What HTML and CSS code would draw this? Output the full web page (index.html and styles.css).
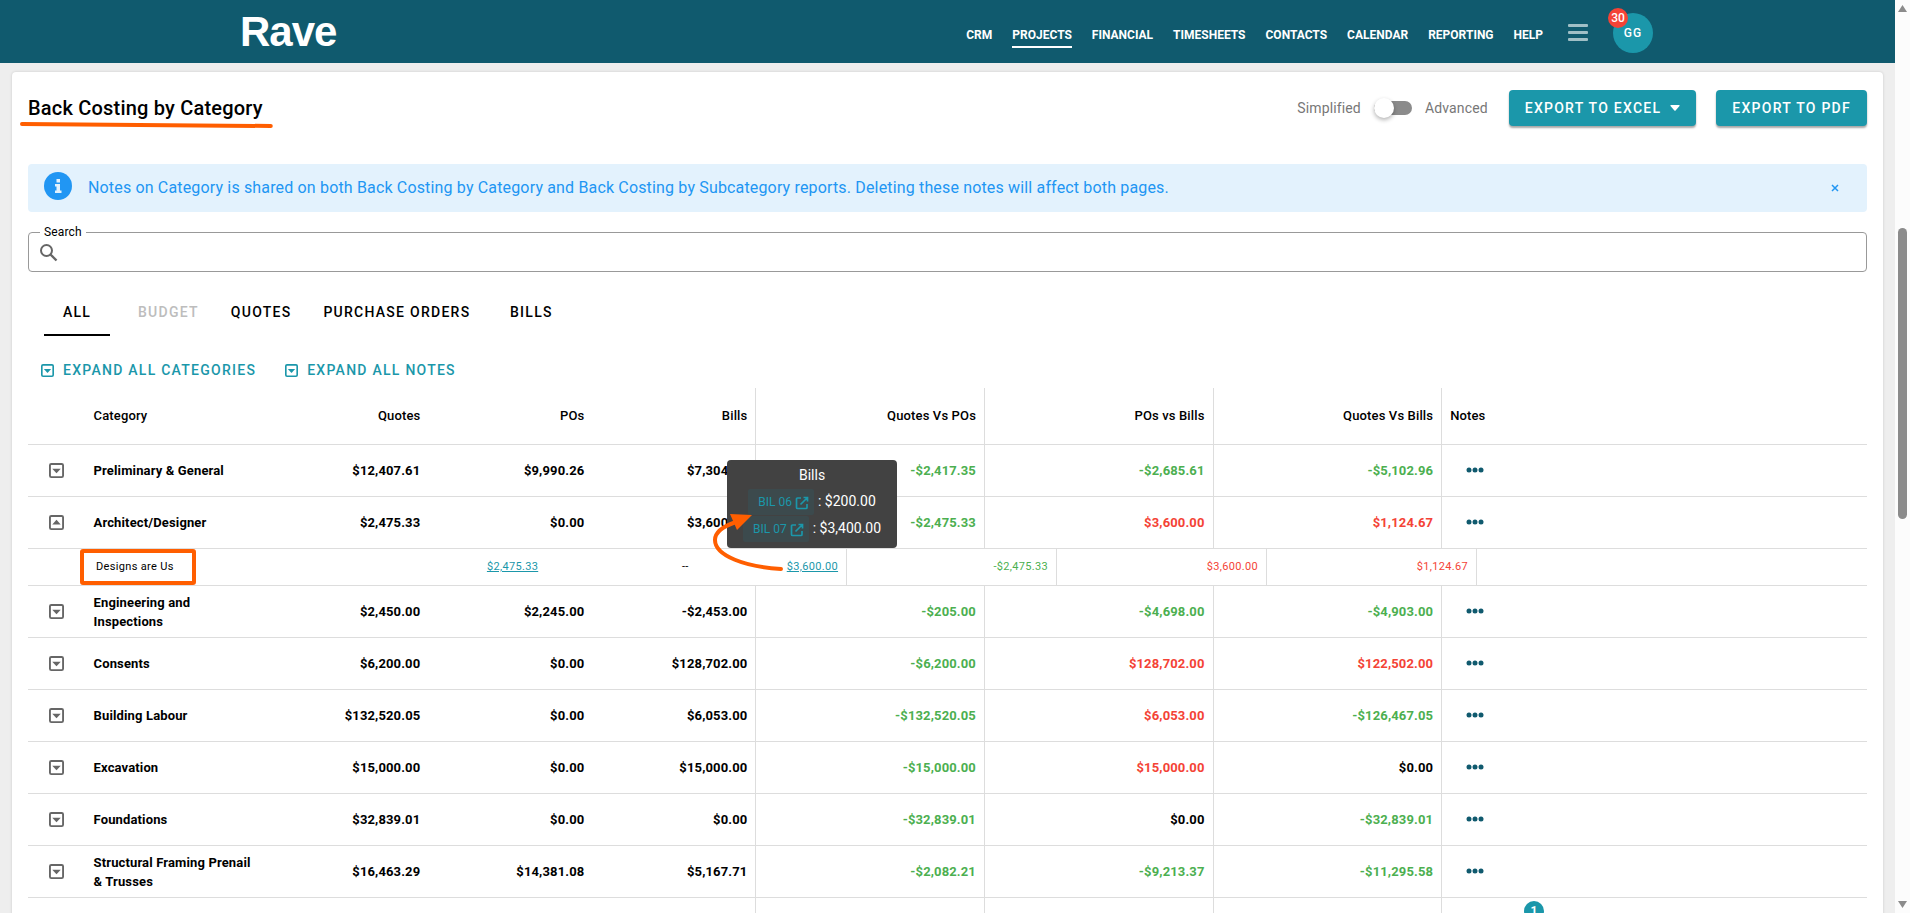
FILE: index.html
```html
<!DOCTYPE html>
<html lang="en">
<head>
    <meta charset="UTF-8">
    <meta name="viewport" content="width=device-width, initial-scale=1.0">
    <title>Back Costing by Category</title>
    <link rel="stylesheet" href="styles.css">
</head>
<body>
    <!-- shared icons -->
    <svg class="sprite" aria-hidden="true">
        <symbol id="caret-down" viewBox="0 0 16 16">
            <rect x="1" y="1" width="14" height="14" rx="1.5" fill="none" stroke="currentColor" stroke-width="2"/>
            <path d="M3.500 6h9l-4.500 5z" fill="currentColor"/>
        </symbol>
        <symbol id="caret-up" viewBox="0 0 16 16">
            <rect x="1" y="1" width="14" height="14" rx="1.5" fill="none" stroke="currentColor" stroke-width="2"/>
            <path d="M3.500 10h9l-4.500-5z" fill="currentColor"/>
        </symbol>
        <symbol id="dots" viewBox="0 0 18 6">
            <circle cx="3" cy="3" r="2.5" fill="currentColor"/>
            <circle cx="9" cy="3" r="2.5" fill="currentColor"/>
            <circle cx="15" cy="3" r="2.5" fill="currentColor"/>
        </symbol>
        <symbol id="open" viewBox="0 0 14 14">
            <path d="M6 2H2.500Q1.500 2 1.500 3v8.500q0 1 1 1H11q1 0 1-1V8M8.500 1.500h4v4M12.500 1.500L5.500 8.500" fill="none" stroke="currentColor" stroke-width="1.7"/>
        </symbol>
    </svg>

    <div class="window">
        <div class="page">
            <header class="topbar">
                <a class="logo" href="#">Rave</a>
                <nav class="nav">
                    <a href="#">CRM</a>
                    <a href="#" class="current">PROJECTS</a>
                    <a href="#">FINANCIAL</a>
                    <a href="#">TIMESHEETS</a>
                    <a href="#">CONTACTS</a>
                    <a href="#">CALENDAR</a>
                    <a href="#">REPORTING</a>
                    <a href="#">HELP</a>
                </nav>
                <button type="button" class="menu" aria-label="Menu"><span></span><span></span><span></span></button>
                <button type="button" class="avatar">GG<span class="count">30</span></button>
            </header>

            <main class="card">
                <div class="heading">
                    <h1>Back Costing by Category
                        <svg class="underline" viewBox="0 0 254 6" preserveAspectRatio="none"><path d="M2 2L252 4" stroke="#ff5e00" stroke-width="4" stroke-linecap="round"/></svg>
                    </h1>
                    <div class="mode">
                        <span>Simplified</span>
                        <input type="checkbox" class="switch" id="mode">
                        <label for="mode">Advanced</label>
                    </div>
                    <button type="button" class="btn">EXPORT TO EXCEL
                        <svg width="10" height="6" viewBox="0 0 10 6"><path d="M1 0h8q1 0 .5 1L5.600 5.500q-.6.500-1.200 0L.5 1Q0 0 1 0z" fill="#fff"/></svg>
                    </button>
                    <button type="button" class="btn">EXPORT TO PDF</button>
                </div>

                <div class="alert">
                    <svg width="28" height="28" viewBox="0 0 28 28">
                        <circle cx="14" cy="14" r="14" fill="#2196f3"/>
                        <path d="M12.500 7h3.500v3.500h-3.500zM11 12h5v6.500h1.500V21H11v-2.500h1.500v-4H11z" fill="#e3f2fd"/>
                    </svg>
                    <p>Notes on Category is shared on both Back Costing by Category and Back Costing by Subcategory reports. Deleting these notes will affect both pages.</p>
                    <button type="button" class="close" aria-label="Close"><svg width="8" height="8" viewBox="0 0 8 8"><path d="M1 1l6 6M7 1L1 7" stroke="currentColor" stroke-width="1.5"/></svg></button>
                </div>

                <fieldset class="search">
                    <legend><label for="search">Search</label></legend>
                    <svg width="18" height="18" viewBox="0 0 18 18"><circle cx="6.500" cy="6.500" r="5.500" fill="none" stroke="#666" stroke-width="2"/><path d="M10.500 10.500L16.500 16.500" stroke="#666" stroke-width="2.400"/></svg>
                    <input type="text" id="search">
                </fieldset>

                <div class="tabs" role="tablist">
                    <button type="button" role="tab" class="active">ALL</button>
                    <button type="button" role="tab" disabled>BUDGET</button>
                    <button type="button" role="tab">QUOTES</button>
                    <button type="button" role="tab">PURCHASE ORDERS</button>
                    <button type="button" role="tab">BILLS</button>
                </div>

                <div class="expand">
                    <button type="button"><svg width="13" height="13"><use href="#caret-down"/></svg>EXPAND ALL CATEGORIES</button>
                    <button type="button"><svg width="13" height="13"><use href="#caret-down"/></svg>EXPAND ALL NOTES</button>
                </div>

                <table class="costs">
                    <colgroup>
                        <col class="c-toggle"><col class="c-name">
                        <col class="c-sum"><col class="c-sum"><col class="c-sum">
                        <col class="c-diff"><col class="c-diff"><col class="c-diff">
                        <col>
                    </colgroup>
                    <thead>
                        <tr>
                            <th></th><th class="name">Category</th><th>Quotes</th><th>POs</th><th class="line">Bills</th>
                            <th class="line">Quotes Vs POs</th><th class="line">POs vs Bills</th><th class="line">Quotes Vs Bills</th><th class="notes">Notes</th>
                        </tr>
                    </thead>
                    <tbody>
                        <tr>
                            <td class="toggle"><button type="button" aria-label="Expand"><svg width="15" height="15"><use href="#caret-down"/></svg></button></td>
                            <td class="name">Preliminary &amp; General</td><td>$12,407.61</td><td>$9,990.26</td><td class="line">$7,304.91</td>
                            <td class="line good">-$2,417.35</td><td class="line good">-$2,685.61</td><td class="line good">-$5,102.96</td>
                            <td class="more"><button type="button" aria-label="Notes"><svg width="18" height="6"><use href="#dots"/></svg></button></td>
                        </tr>
                        <tr>
                            <td class="toggle"><button type="button" aria-label="Collapse"><svg width="15" height="15"><use href="#caret-up"/></svg></button></td>
                            <td class="name">Architect/Designer</td><td>$2,475.33</td><td>$0.00</td><td class="line">$3,600.00</td>
                            <td class="line good">-$2,475.33</td><td class="line bad">$3,600.00</td><td class="line bad">$1,124.67</td>
                            <td class="more"><button type="button" aria-label="Notes"><svg width="18" height="6"><use href="#dots"/></svg></button></td>
                        </tr>
                        <tr class="detail">
                            <td colspan="9">
                                <table class="suppliers">
                                    <colgroup>
                                        <col class="s-name">
                                        <col class="s-sum"><col class="s-sum"><col class="s-sum">
                                        <col class="s-diff"><col class="s-diff"><col class="s-diff">
                                        <col>
                                    </colgroup>
                                    <tr>
                                        <td class="name"><span class="marked">Designs are Us</span></td>
                                        <td><a href="#">$2,475.33</a></td>
                                        <td>--</td>
                                        <td class="line">
                                            <span class="anchor"><a href="#">$3,600.00</a>
                                                <span class="tooltip" role="tooltip">
                                                    <span>Bills</span>
                                                    <span class="bill"><a href="#">BIL 06 <svg width="14" height="14"><use href="#open"/></svg></a>: $200.00</span>
                                                    <span class="bill"><a href="#">BIL 07 <svg width="14" height="14"><use href="#open"/></svg></a>: $3,400.00</span>
                                                </span>
                                                <svg class="arrow" width="76" height="60" viewBox="0 0 76 60">
                                                    <path d="M69 55C34 53 3 42 3 26C3 18 12 12 24 8" fill="none" stroke="#ff5e00" stroke-width="4" stroke-linecap="round"/>
                                                    <path d="M18 0L40 1L25 16z" fill="#ff5e00"/>
                                                </svg>
                                            </span>
                                        </td>
                                        <td class="line good">-$2,475.33</td><td class="line bad">$3,600.00</td><td class="line bad">$1,124.67</td><td></td>
                                    </tr>
                                </table>
                            </td>
                        </tr>
                        <tr>
                            <td class="toggle"><button type="button" aria-label="Expand"><svg width="15" height="15"><use href="#caret-down"/></svg></button></td>
                            <td class="name">Engineering and Inspections</td><td>$2,450.00</td><td>$2,245.00</td><td class="line">-$2,453.00</td>
                            <td class="line good">-$205.00</td><td class="line good">-$4,698.00</td><td class="line good">-$4,903.00</td>
                            <td class="more"><button type="button" aria-label="Notes"><svg width="18" height="6"><use href="#dots"/></svg></button></td>
                        </tr>
                        <tr>
                            <td class="toggle"><button type="button" aria-label="Expand"><svg width="15" height="15"><use href="#caret-down"/></svg></button></td>
                            <td class="name">Consents</td><td>$6,200.00</td><td>$0.00</td><td class="line">$128,702.00</td>
                            <td class="line good">-$6,200.00</td><td class="line bad">$128,702.00</td><td class="line bad">$122,502.00</td>
                            <td class="more"><button type="button" aria-label="Notes"><svg width="18" height="6"><use href="#dots"/></svg></button></td>
                        </tr>
                        <tr>
                            <td class="toggle"><button type="button" aria-label="Expand"><svg width="15" height="15"><use href="#caret-down"/></svg></button></td>
                            <td class="name">Building Labour</td><td>$132,520.05</td><td>$0.00</td><td class="line">$6,053.00</td>
                            <td class="line good">-$132,520.05</td><td class="line bad">$6,053.00</td><td class="line good">-$126,467.05</td>
                            <td class="more"><button type="button" aria-label="Notes"><svg width="18" height="6"><use href="#dots"/></svg></button></td>
                        </tr>
                        <tr>
                            <td class="toggle"><button type="button" aria-label="Expand"><svg width="15" height="15"><use href="#caret-down"/></svg></button></td>
                            <td class="name">Excavation</td><td>$15,000.00</td><td>$0.00</td><td class="line">$15,000.00</td>
                            <td class="line good">-$15,000.00</td><td class="line bad">$15,000.00</td><td class="line">$0.00</td>
                            <td class="more"><button type="button" aria-label="Notes"><svg width="18" height="6"><use href="#dots"/></svg></button></td>
                        </tr>
                        <tr>
                            <td class="toggle"><button type="button" aria-label="Expand"><svg width="15" height="15"><use href="#caret-down"/></svg></button></td>
                            <td class="name">Foundations</td><td>$32,839.01</td><td>$0.00</td><td class="line">$0.00</td>
                            <td class="line good">-$32,839.01</td><td class="line">$0.00</td><td class="line good">-$32,839.01</td>
                            <td class="more"><button type="button" aria-label="Notes"><svg width="18" height="6"><use href="#dots"/></svg></button></td>
                        </tr>
                        <tr>
                            <td class="toggle"><button type="button" aria-label="Expand"><svg width="15" height="15"><use href="#caret-down"/></svg></button></td>
                            <td class="name">Structural Framing Prenail &amp; Trusses</td><td>$16,463.29</td><td>$14,381.08</td><td class="line">$5,167.71</td>
                            <td class="line good">-$2,082.21</td><td class="line good">-$9,213.37</td><td class="line good">-$11,295.58</td>
                            <td class="more"><button type="button" aria-label="Notes"><svg width="18" height="6"><use href="#dots"/></svg></button></td>
                        </tr>
                        <tr>
                            <td></td><td></td><td></td><td></td><td class="line"></td><td class="line"></td><td class="line"></td><td class="line"></td>
                            <td class="noted"><span class="badge">1</span></td>
                        </tr>
                    </tbody>
                </table>
            </main>
        </div>

        <div class="scrollbar" aria-hidden="true">
            <svg width="9" height="7" viewBox="0 0 9 7"><path d="M4.500 0L9 7H0z" fill="#8b8b8b"/></svg>
            <span class="track"><span class="thumb"></span></span>
            <svg width="9" height="7" viewBox="0 0 9 7"><path d="M4.500 7L9 0H0z" fill="#8b8b8b"/></svg>
        </div>
    </div>
</body>
</html>
```
FILE: styles.css
```css
* {
    box-sizing: border-box;
}
body {
    margin: 0;
    font-family: Roboto, "Liberation Sans", sans-serif;
    font-size: 14px;
    color: #000;
    background: #eee;
}
button {
    font: inherit;
    color: inherit;
    padding: 0;
    border: none;
    background: none;
    cursor: pointer;
}
.sprite {
    display: none;
}
.window {
    display: flex;
    height: 100vh;
    overflow: hidden;
}
.page {
    flex: 1;
    min-width: 0;
    overflow: hidden;
}

/* top bar */
.topbar {
    display: flex;
    align-items: center;
    height: 63px;
    padding: 0 242px 0 240px;
    background: #105a6e;
    color: #fff;
}
.logo {
    margin-right: auto;
    font-family: "Liberation Sans", Arial, sans-serif;
    font-size: 42px;
    font-weight: bold;
    line-height: 48px;
    letter-spacing: -1px;
    color: #fff;
    text-decoration: none;
}
.nav {
    display: flex;
    gap: 20px;
    padding-top: 8px;
    font-size: 12px;
    font-weight: bold;
}
.nav a {
    height: 24px;
    line-height: 16px;
    padding-top: 3px;
    color: #fff;
    text-decoration: none;
    border-bottom: 2px solid transparent;
}
.nav .current {
    border-color: #fff;
}
.menu {
    display: flex;
    flex-direction: column;
    gap: 4px;
    margin: 1px 25px 0;
}
.menu span {
    width: 20px;
    height: 3px;
    border-radius: 1px;
    background: #a0bfc6;
}
.avatar {
    position: relative;
    width: 40px;
    height: 40px;
    margin-top: 3px;
    border-radius: 50%;
    background: #1b97aa;
    font-size: 12px;
    font-weight: 500;
    letter-spacing: 1px;
}
.count {
    position: absolute;
    top: -5px;
    left: -5px;
    width: 20px;
    height: 20px;
    border-radius: 50%;
    background: #f44336;
    line-height: 20px;
    letter-spacing: 0;
}

/* card */
.card {
    margin: 9px 12px 0;
    padding: 0 16px;
    border-radius: 4px;
    background: #fff;
    box-shadow: 0 0 3px rgba(0,0,0,0.15);
    letter-spacing: 0.01em;
}
.heading {
    display: flex;
    align-items: center;
    height: 72px;
}
h1 {
    position: relative;
    margin: 0 auto 0 0;
    font-size: 20px;
    font-weight: 500;
    line-height: 32px;
    letter-spacing: 0.01em;
}
.underline {
    position: absolute;
    left: -8px;
    bottom: -4px;
    width: calc(100% + 18px);
    height: 6px;
}
.mode {
    display: flex;
    align-items: center;
    gap: 13px;
    margin-right: 21px;
    color: #777;
}
.switch {
    appearance: none;
    position: relative;
    width: 38px;
    height: 14px;
    margin: 0;
    border-radius: 7px;
    background: #8b8b8b;
}
.switch::before {
    content: "";
    position: absolute;
    top: -3px;
    left: 0;
    width: 20px;
    height: 20px;
    border-radius: 50%;
    background: #fff;
    box-shadow: 0 2px 4px rgba(0,0,0,0.3);
}
.btn {
    display: flex;
    align-items: center;
    gap: 9px;
    height: 36px;
    padding: 0 16px;
    border-radius: 4px;
    background: #1b97aa;
    color: #fff;
    font-weight: 500;
    letter-spacing: 0.09em;
    box-shadow: 0 2px 2px rgba(0,0,0,0.35);
}
.btn + .btn {
    margin-left: 20px;
}
.alert {
    display: flex;
    align-items: center;
    height: 48px;
    margin-top: 20px;
    padding: 0 28px 0 16px;
    border-radius: 4px;
    background: #e3f2fd;
    color: #2196f3;
    font-size: 16px;
    letter-spacing: 0.01em;
}
.alert > svg {
    margin-bottom: 4px;
}
.alert p {
    flex: 1;
    margin: 0 16px;
    padding-bottom: 2px;
}
.close svg {
    display: block;
}
.search {
    display: flex;
    align-items: center;
    height: 47px;
    margin: 13px 0 0;
    padding: 0 11px 4px;
    border: 1px solid #999;
    border-radius: 4px;
}
.search legend {
    padding: 0 4px;
    font-size: 12px;
    line-height: 14px;
}
.search input {
    flex: 1;
    height: 28px;
    border: none;
    outline: none;
    background: none;
    font: inherit;
}

/* tabs */
.tabs {
    display: flex;
    margin: 16px 4px 0;
}
.tabs button {
    position: relative;
    min-width: 90px;
    height: 48px;
    padding: 0 16px;
    font-weight: 500;
    letter-spacing: 0.09em;
}
.tabs button:disabled {
    color: #bdbdbd;
}
.tabs .active::after {
    content: "";
    position: absolute;
    left: 12px;
    right: 12px;
    bottom: 0;
    height: 2px;
    background: #000;
}
.expand {
    display: flex;
    gap: 29px;
    height: 36px;
    margin: 16px 0 0 13px;
}
.expand button {
    display: flex;
    align-items: center;
    gap: 9px;
    color: #1b97aa;
    font-weight: 500;
    letter-spacing: 0.09em;
}

/* table */
table {
    width: 100%;
    table-layout: fixed;
    border-collapse: separate;
    border-spacing: 0;
}
.c-toggle { width: 3.13%; }
.c-name { width: 9.72%; }
.c-sum { width: 8.92%; }
.c-diff { width: 12.43%; }
.s-name { width: 20%; }
.s-sum { width: 8.18%; }
.s-diff { width: 11.42%; }
th, td {
    height: 52px;
    padding: 0 8px;
    border-bottom: 1px solid #ddd;
    font-size: 13px;
    font-weight: bold;
    line-height: 19px;
    text-align: right;
}
th {
    height: 57px;
    padding-bottom: 2px;
    font-weight: 500;
}
.line {
    border-right: 1px solid #ddd;
}
.name, .notes, .more {
    text-align: left;
}
.good {
    color: #4caf50;
}
.bad {
    color: #f44336;
}
.toggle {
    color: #666;
}
.toggle button {
    display: block;
    margin: 0 auto;
}
td button svg {
    display: block;
}
.more {
    padding: 0 0 2px 24px;
    color: #105a6e;
}
.more button {
    display: block;
}
.costs .detail > td {
    height: 37px;
    padding: 0;
}
.suppliers td {
    height: 36px;
    padding-bottom: 1px;
    border-bottom: none;
    font-size: 11px;
    font-weight: normal;
    letter-spacing: 0.03em;
}
.suppliers .name {
    padding: 0 0 0 52px;
}
.suppliers a {
    color: #1b97aa;
}
.marked {
    display: block;
    width: fit-content;
    height: 36px;
    padding: 0 18px 0 12px;
    border: 4px solid #ff5e00;
    border-radius: 3px;
    line-height: 28px;
}
.anchor {
    position: relative;
}
.tooltip {
    position: absolute;
    right: -59px;
    bottom: 25px;
    width: 170px;
    height: 88px;
    padding-top: 2px;
    border-radius: 4px;
    background: #424242;
    color: #fff;
    font-size: 14px;
    letter-spacing: 0;
    text-align: center;
}
.tooltip > span {
    display: block;
    line-height: 26px;
}
.bill a {
    display: inline-block;
    margin-right: 4px;
    padding: 0 5px 0 10px;
    border-radius: 2px;
    background: #3c4a4d;
    font-size: 12px;
    text-decoration: none;
}
.bill svg {
    vertical-align: middle;
}
.arrow {
    position: absolute;
    right: 50px;
    bottom: -1px;
}
.noted {
    padding: 3px 0 0 82px;
    vertical-align: top;
}
.badge {
    display: block;
    width: 20px;
    height: 20px;
    border-radius: 50%;
    background: #1b97aa;
    color: #fff;
    font-size: 12px;
    line-height: 20px;
    text-align: center;
}

/* scrollbar */
.scrollbar {
    display: flex;
    flex-direction: column;
    align-items: center;
    width: 15px;
    padding: 5px 0;
    background: #fcfcfc;
}
.track {
    flex: 1;
    padding-top: 216px;
}
.thumb {
    display: block;
    width: 9px;
    height: 291px;
    border-radius: 5px;
    background: #8b8b8b;
}
```
